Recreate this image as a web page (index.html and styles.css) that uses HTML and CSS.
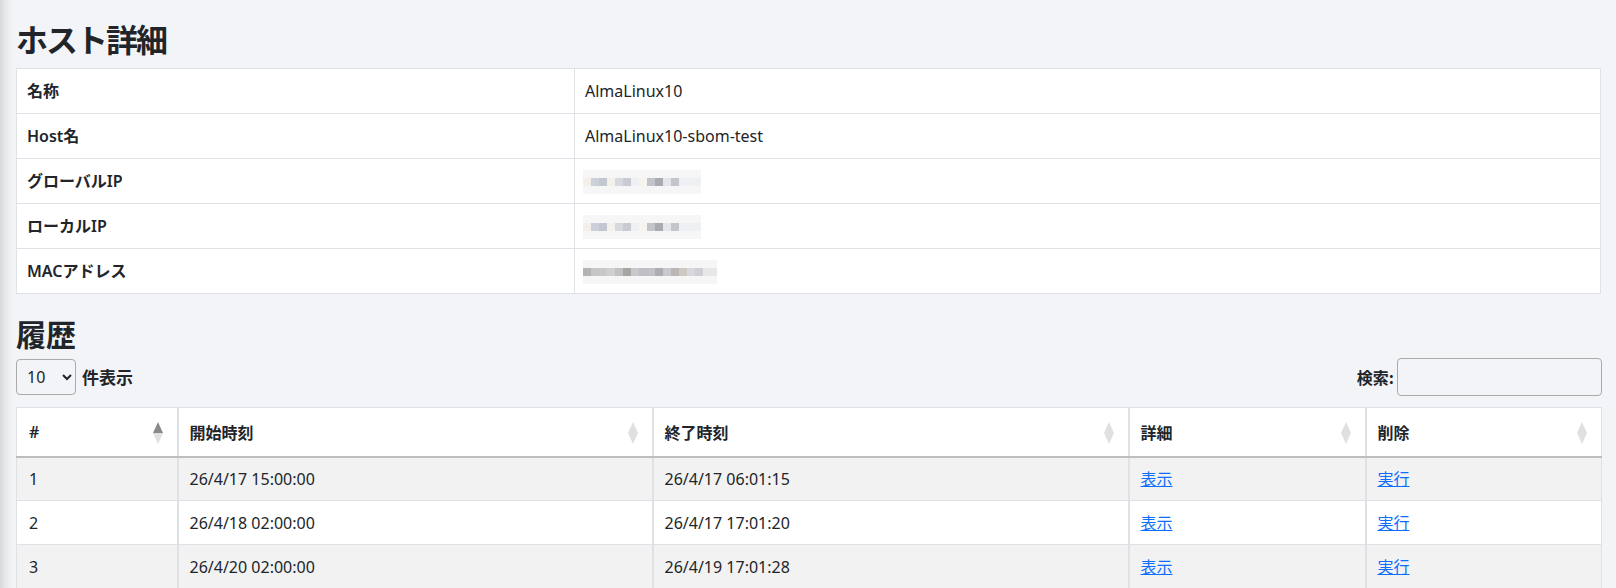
FILE: index.html
```html
<!DOCTYPE html>
<html lang="ja">
<head>
<meta charset="utf-8">
<title>ホスト詳細</title>
<link rel="stylesheet" href="styles.css">
</head>
<body>
<div class="page">
  <h2 class="title">ホスト詳細</h2>
  <table class="detail">
    <tbody>
      <tr><th>名称</th><td>AlmaLinux10</td></tr>
      <tr><th>Host名</th><td>AlmaLinux10-sbom-test</td></tr>
      <tr><th>グローバルIP</th><td><span class="mosaic ip"></span></td></tr>
      <tr><th>ローカルIP</th><td><span class="mosaic ip ip2"></span></td></tr>
      <tr><th>MACアドレス</th><td><span class="mosaic mac"></span></td></tr>
    </tbody>
  </table>

  <h3 class="subtitle">履歴</h3>
  <div class="controls">
    <label class="length">
      <select class="sel"><option>10</option><option>25</option><option>50</option></select>
      <span>件表示</span>
    </label>
    <label class="search">
      <span>検索:</span>
      <input type="search" class="inp">
    </label>
  </div>

  <table class="history">
    <colgroup>
      <col class="c1"><col class="c2"><col class="c3"><col class="c4"><col class="c5">
    </colgroup>
    <thead>
      <tr>
        <th><span>#</span><i class="sort asc"></i></th>
        <th><span>開始時刻</span><i class="sort"></i></th>
        <th><span>終了時刻</span><i class="sort"></i></th>
        <th><span>詳細</span><i class="sort"></i></th>
        <th><span>削除</span><i class="sort"></i></th>
      </tr>
    </thead>
    <tbody>
      <tr class="odd"><td>1</td><td>26/4/17 15:00:00</td><td>26/4/17 06:01:15</td><td><a href="#">表示</a></td><td><a href="#">実行</a></td></tr>
      <tr><td>2</td><td>26/4/18 02:00:00</td><td>26/4/17 17:01:20</td><td><a href="#">表示</a></td><td><a href="#">実行</a></td></tr>
      <tr class="odd"><td>3</td><td>26/4/20 02:00:00</td><td>26/4/19 17:01:28</td><td><a href="#">表示</a></td><td><a href="#">実行</a></td></tr>
    </tbody>
  </table>
</div>
</body>
</html>
```

FILE: styles.css
```css
html, body {
  margin: 0;
  padding: 0;
}
body {
  background:
    linear-gradient(to right, #d8d8da 0px, #e6e7ea 5px, #f3f4f7 13px) left top / 13px 100% no-repeat,
    #f3f4f7;
  font-family: "Noto Sans", "Noto Sans CJK JP", sans-serif;
  font-size: 16px;
  line-height: 24px;
  color: #212529;
  min-height: 588px;
}
.page {
  padding: 19px 15px 0 16px;
}
.title {
  font-family: "Noto Sans CJK JP", sans-serif;
  font-size: 32px;
  line-height: 38px;
  font-weight: 700;
  letter-spacing: -2px;
  margin: 0 0 11px 0;
}
.subtitle {
  font-family: "Noto Sans CJK JP", sans-serif;
  font-size: 30px;
  line-height: 34px;
  font-weight: 700;
  margin: 22px 0 8px 0;
}
table {
  border-collapse: collapse;
  width: 100%;
}
.detail {
  background: #fff;
}
.detail tr {
  height: 45px;
}
.detail th, .detail td {
  border: 1px solid #dee2e6;
  padding: 0 10px;
  text-align: left;
  vertical-align: middle;
}
.detail th {
  width: 537px;
  font-weight: 600;
}
.detail td {
  font-weight: 400;
}
.mosaic {
  display: inline-block;
  vertical-align: middle;
  height: 24px;
  background-color: #f6f6f7;
}
.ip {
  width: 118px;
  margin-left: -2px;
  background-image:
    linear-gradient(to right,
      #f4efe9 0 8px, #cbd0da 8px 16px, #c4c7cf 16px 24px, #f4f1ea 24px 32px, #d7d9de 32px 40px,
      #c9cbd2 40px 48px, #eef0f2 48px 56px, #f6f4ef 56px 64px, #c2c4cb 64px 72px, #a9abb1 72px 80px,
      #e5e6ea 80px 88px, #c3c5cb 88px 96px, #eef0f3 96px 118px);
  background-size: 100% 8px;
  background-position: 0 8px;
  background-repeat: no-repeat;
}
.mac {
  width: 134px;
  margin-left: -2px;
  background-image:
    linear-gradient(to right,
      #b4b3b2 0 8px, #c6c6c8 8px 16px, #c8c9cb 16px 24px, #cfd0d2 24px 32px, #c2c2c4 32px 40px,
      #a7a6a5 40px 48px, #c6c8cc 48px 56px, #bdbfc3 56px 64px, #c2c3c7 64px 72px, #adaeb1 72px 80px,
      #c7c9cc 80px 88px, #b9b8b7 88px 96px, #cfc9c4 96px 104px, #d8d9dc 104px 112px, #cfd0d3 112px 120px, #e6e7e9 120px 134px);
  background-size: 100% 8px;
  background-position: 0 8px;
  background-repeat: no-repeat;
}
.controls {
  display: flex;
  justify-content: space-between;
  align-items: center;
  margin-bottom: 11px;
}
.length, .search {
  display: flex;
  align-items: center;
  font-weight: 600;
}
.length span {
  margin-left: 6px;
  font-family: "Noto Sans CJK JP", sans-serif;
  font-size: 17px;
}
.sel {
  width: 60px;
  height: 36px;
  border: 1px solid #aaa;
  border-radius: 4px;
  background: #f3f4f7;
  font-family: "Noto Sans", sans-serif;
  font-size: 16px;
  color: #212529;
  padding: 0 4px 0 6px;
}
.search span {
  margin-right: 3px;
  font-family: "Noto Sans CJK JP", sans-serif;
}
.inp {
  width: 205px;
  height: 38px;
  box-sizing: border-box;
  border: 1px solid #aaa;
  border-radius: 4px;
  background: transparent;
  margin-right: -1px;
}
.history {
  background: #fff;
  table-layout: fixed;
}
.c1 { width: 161px; }
.c2 { width: 475px; }
.c3 { width: 476px; }
.c4 { width: 237px; }
.c5 { width: 236px; }
.history thead tr {
  height: 49px;
}
.history tbody tr {
  height: 44px;
}
.history th, .history td {
  border: 1px solid #dee2e6;
  border-left-width: 2px;
  text-align: left;
  vertical-align: middle;
}
.history th:first-child, .history td:first-child {
  border-left-width: 1px;
}
.history th {
  position: relative;
  padding: 0 12px 0 11px;
  font-weight: 600;
  border-bottom: 2px solid #bdbdbd;
  font-family: "Noto Sans CJK JP", sans-serif;
}
.history th:first-child {
  font-family: "Noto Sans", sans-serif;
}
.history td {
  padding: 0 12px 0 11px;
}
.history th:first-child, .history td:first-child {
  padding-left: 12px;
}
.history tr.odd td {
  background: #f2f2f2;
}
.history a {
  color: #0d6efd;
  text-decoration: underline;
  font-family: "Noto Sans CJK JP", sans-serif;
}
.sort {
  position: absolute;
  right: 13px;
  top: 14px;
  width: 11px;
  height: 22px;
}
.sort::before, .sort::after {
  content: "";
  position: absolute;
  left: 0;
  border-left: 5.5px solid transparent;
  border-right: 5.5px solid transparent;
}
.sort::before {
  top: 0;
  border-bottom: 11px solid #e0e0e0;
}
.sort::after {
  top: 11px;
  border-top: 11px solid #e0e0e0;
}
.sort.asc::before {
  border-bottom-color: #8a8a8a;
}
```
